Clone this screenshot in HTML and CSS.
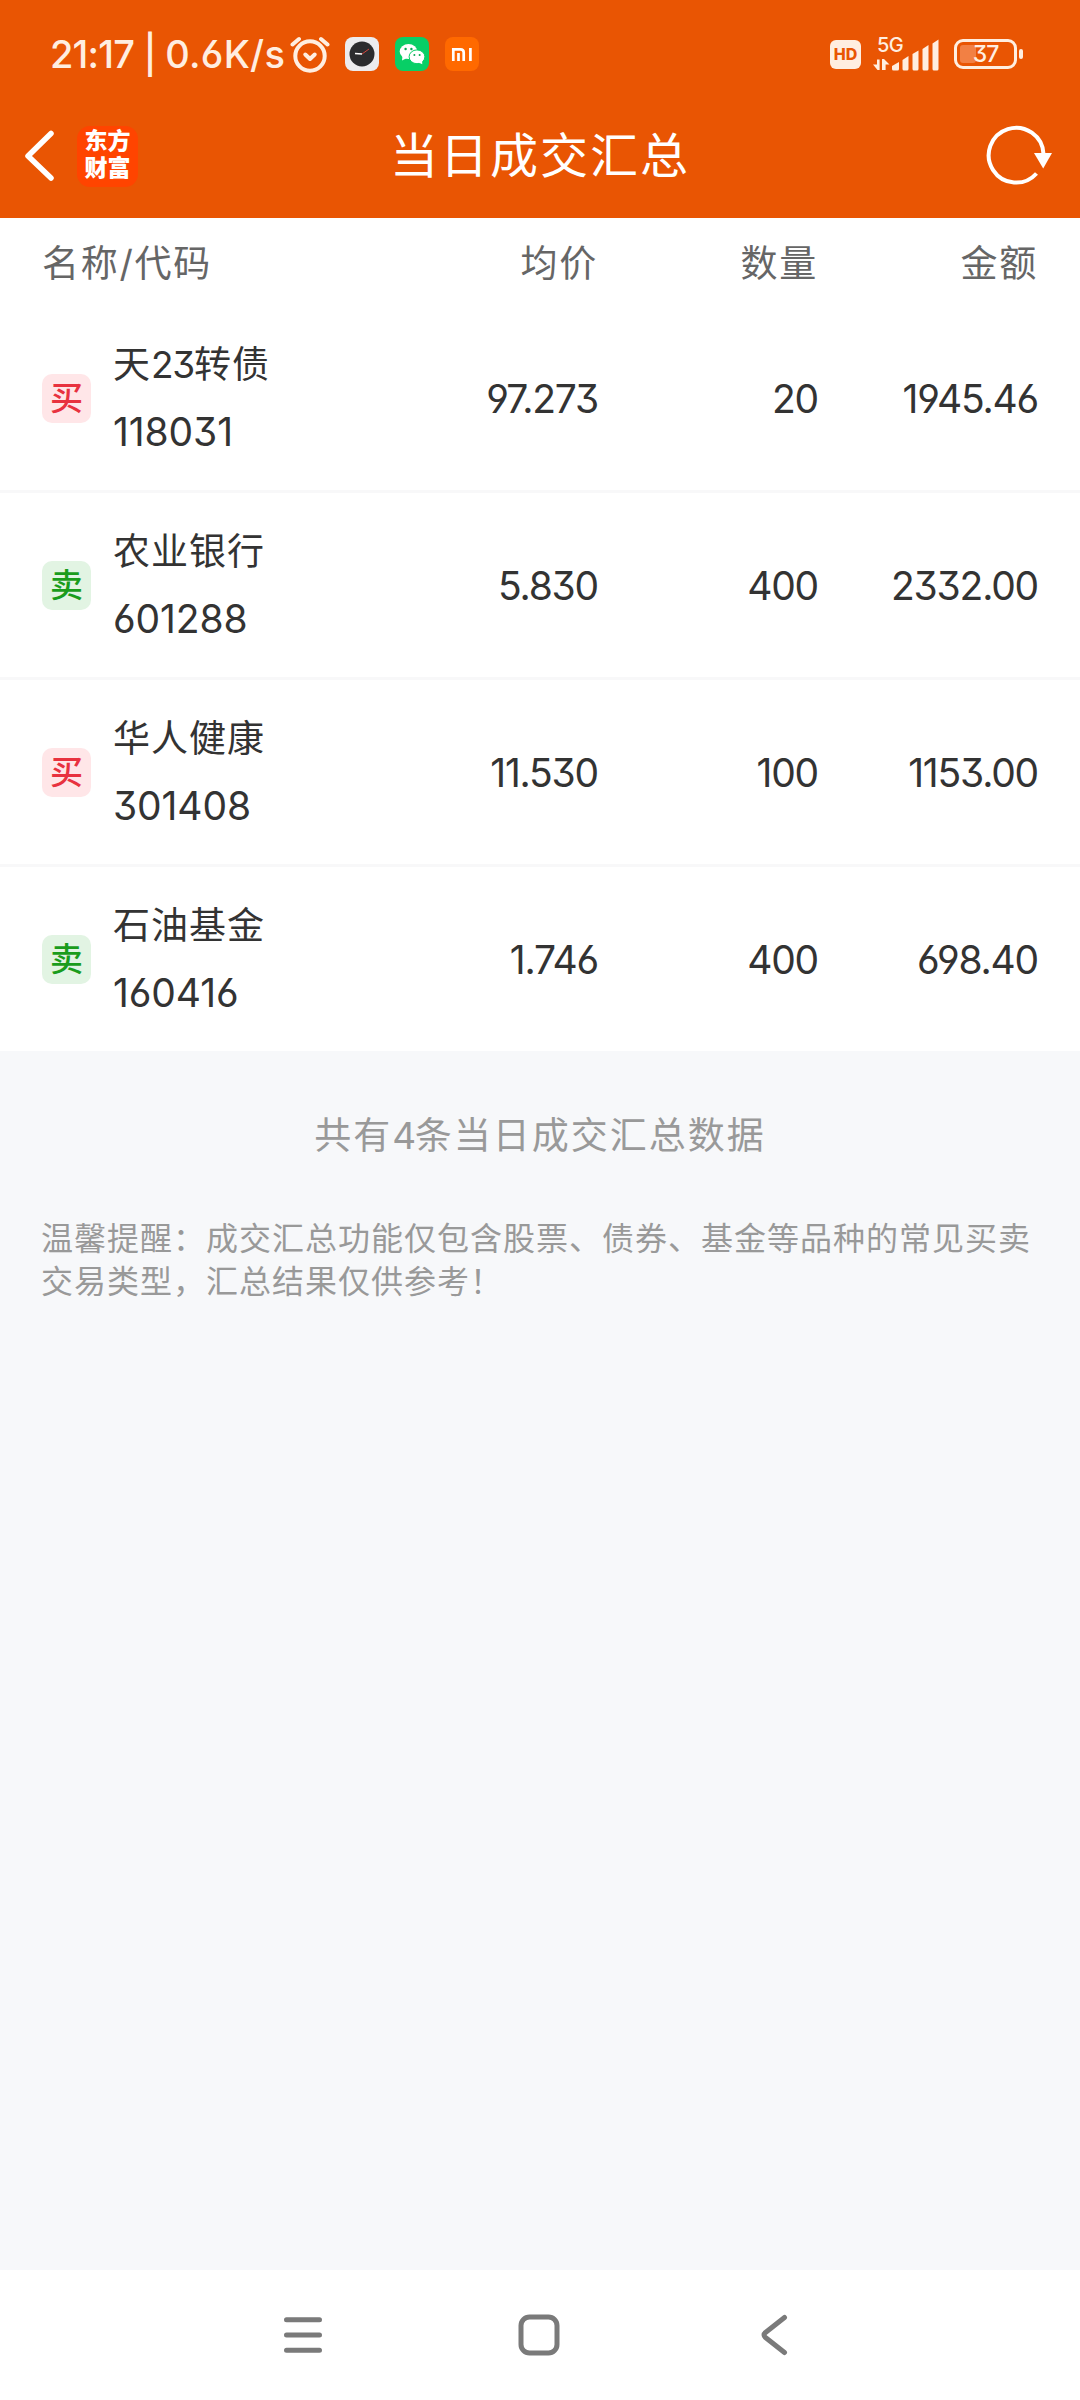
FILE: index.html
```html
<!DOCTYPE html>
<html lang="zh-CN">
<head>
    <meta charset="UTF-8">
    <meta name="viewport" content="width=device-width, initial-scale=1.0">
    <title>当日成交汇总</title>
    <link rel="stylesheet" href="styles.css">
</head>
<body>
    <header class="top">
        <div class="status">
            <span class="clock">21:17 | <span class="speed">0.6K/s</span></span>
            <svg class="alarm" width="40" height="38" viewBox="0 0 40 38" fill="none" stroke="#ffeee0" stroke-linecap="round">
                <circle cx="20" cy="21" r="14.7" stroke-width="4"/>
                <path d="M2.5 9.5 L9 4 M37.5 9.5 L31 4" stroke-width="4"/>
                <path d="M15.3 19.5 L20 24 L24.7 19.5" stroke-width="4" stroke-linejoin="round"/>
            </svg>
            <svg class="app-icon" width="34" height="34" viewBox="0 0 34 34">
                <rect width="34" height="34" rx="8" fill="#ececee"/>
                <circle cx="17" cy="17" r="12.5" fill="#2b2c2e"/>
                <path d="M10 16.5 L17 17" stroke="#fff" stroke-width="1.3"/>
                <path d="M17 17 L24 12" stroke="#d0443c" stroke-width="1"/>
            </svg>
            <svg class="app-icon" width="34" height="34" viewBox="0 0 34 34">
                <rect width="34" height="34" rx="8" fill="#08cf66"/>
                <ellipse cx="13.5" cy="14.5" rx="8.8" ry="7.6" fill="#fff"/>
                <path d="M7.5 19 L7 23.5 L12 21 Z" fill="#fff"/>
                <ellipse cx="22" cy="19.8" rx="7.9" ry="6.9" fill="#fff" stroke="#08cf66" stroke-width="1"/>
                <path d="M23.5 25.5 L27.3 27.3 L27 23.5 Z" fill="#fff"/>
                <g fill="#08a852">
                    <circle cx="10.6" cy="12" r="1.2"/><circle cx="16.4" cy="12" r="1.2"/>
                    <circle cx="19.4" cy="18" r="1"/><circle cx="24.6" cy="18" r="1"/>
                </g>
            </svg>
            <svg class="app-icon" width="34" height="34" viewBox="0 0 34 34">
                <rect width="34" height="34" rx="8" fill="#ff6900"/>
                <path d="M8.3 24 V12.3 H15.5 Q18.7 12.3 18.7 15.5 V24 M13.5 16 V24 M25.4 11 V24" fill="none" stroke="#fff" stroke-width="2.7"/>
            </svg>

            <div class="status-right">
                <span class="hd">HD</span>
                <div class="signal">
                    <span class="net">5G</span>
                    <svg width="68" height="34" viewBox="0 0 68 34" fill="#ffeee0">
                        <path d="M4 22.5 h2.6 V33 H4.5 L0 27.5 H4 Z M9 22 h2 L16.5 27.5 H12.6 V33 H9 Z"/>
                        <path d="M19 32 V29 L26 25 V32 Q26 33.5 24.5 33.5 H20.5 Q19 33.5 19 32 Z"/>
                        <path d="M29.5 32 V23 L35.5 19 V32 Q35.5 33.5 34 33.5 H31 Q29.5 33.5 29.5 32 Z"/>
                        <path d="M39.5 32 V17 L45.5 13.5 V32 Q45.5 33.5 44 33.5 H41 Q39.5 33.5 39.5 32 Z"/>
                        <path d="M49.5 32 V12 L55.5 8 V32 Q55.5 33.5 54 33.5 H51 Q49.5 33.5 49.5 32 Z"/>
                        <path d="M59.5 32 V6.5 L65.5 2.5 V32 Q65.5 33.5 64 33.5 H61 Q59.5 33.5 59.5 32 Z"/>
                    </svg>
                </div>
                <div class="battery">
                    <div class="level"></div>
                    <span class="percent">37</span>
                </div>
                <div class="battery-tip"></div>
            </div>
        </div>

        <div class="titlebar">
            <svg class="back" width="34" height="54" viewBox="0 0 34 54" fill="none" stroke="#fff" stroke-width="5.5" stroke-linecap="round" stroke-linejoin="round">
                <path d="M28 4.5 L5 27 L28 49"/>
            </svg>
            <div class="brand">东方<br>财富</div>
            <h1>当日成交汇总</h1>
            <svg class="refresh" width="68" height="62" viewBox="0 0 68 62">
                <path d="M57.5 29 A27.4 27.4 0 1 0 50.5 48.5" fill="none" stroke="#fff" stroke-width="4"/>
                <path d="M48 28 H66 L57.2 43.5 Z" fill="#fff"/>
            </svg>
        </div>
    </header>

    <main>
        <div class="row head">
            <span>名称/代码</span>
            <span class="num">均价</span>
            <span class="num">数量</span>
            <span class="num">金额</span>
        </div>
        <div class="row">
            <div class="stock">
                <span class="tag buy">买</span>
                <div class="info">
                    <div class="name">天<span class="digits">23</span>转债</div>
                    <div class="code">118031</div>
                </div>
            </div>
            <span class="num">97.273</span>
            <span class="num">20</span>
            <span class="num">1945.46</span>
        </div>
        <div class="row">
            <div class="stock">
                <span class="tag sell">卖</span>
                <div class="info">
                    <div class="name">农业银行</div>
                    <div class="code">601288</div>
                </div>
            </div>
            <span class="num">5.830</span>
            <span class="num">400</span>
            <span class="num">2332.00</span>
        </div>
        <div class="row">
            <div class="stock">
                <span class="tag buy">买</span>
                <div class="info">
                    <div class="name">华人健康</div>
                    <div class="code">301408</div>
                </div>
            </div>
            <span class="num">11.530</span>
            <span class="num">100</span>
            <span class="num">1153.00</span>
        </div>
        <div class="row">
            <div class="stock">
                <span class="tag sell">卖</span>
                <div class="info">
                    <div class="name">石油基金</div>
                    <div class="code">160416</div>
                </div>
            </div>
            <span class="num">1.746</span>
            <span class="num">400</span>
            <span class="num">698.40</span>
        </div>
    </main>

    <section class="footer">
        <p class="total">共有<span class="digits">4</span>条当日成交汇总数据</p>
        <p class="tip">温馨提醒：成交汇总功能仅包含股票、债券、基金等品种的常见买卖交易类型，汇总结果仅供参考！</p>
    </section>

    <nav class="navbar">
        <svg width="44" height="44" viewBox="0 0 44 44" stroke="#7a7a7a" stroke-width="5" stroke-linecap="round">
            <path d="M5.5 6.7 H38.5 M5.5 22 H38.5 M5.5 37.3 H38.5"/>
        </svg>
        <svg width="44" height="44" viewBox="0 0 44 44" fill="none" stroke="#7a7a7a" stroke-width="5">
            <rect x="3" y="4" width="36" height="36" rx="8.5"/>
        </svg>
        <svg width="44" height="44" viewBox="0 0 44 44" fill="none" stroke="#7a7a7a" stroke-width="5" stroke-linecap="round">
            <path d="M29.5 4.5 L10.5 19.5 Q7.5 22 10.5 24.5 L29.5 39.5"/>
        </svg>
    </nav>
</body>
</html>
```

FILE: styles.css
```css
* {
    box-sizing: border-box;
}
body {
    margin: 0;
    min-height: 2400px;
    display: flex;
    flex-direction: column;
    background-color: #f7f8fa;
    color: #333;
    font-family: Inter, "Noto Sans CJK SC", sans-serif;
    font-feature-settings: "cv03", "cv04", "cv09";
}

/* status bar + title */
.top {
    height: 218px;
    background-color: #e95503;
    color: #fff;
}
.status {
    height: 108px;
    padding: 0 57px 0 50px;
    display: flex;
    align-items: center;
    color: #ffeee0;
}
.clock {
    width: 240px;
    font-size: 38px;
    font-weight: 500;
    letter-spacing: -0.8px;
    white-space: nowrap;
}
.speed {
    letter-spacing: 0.3px;
}
.alarm {
    margin-right: 15px;
}
.app-icon {
    margin-right: 16px;
}
.status-right {
    display: flex;
    align-items: center;
    margin-left: auto;
}
.hd {
    width: 31px;
    height: 29px;
    border-radius: 6px;
    background-color: #ffeee0;
    color: #e95503;
    font-size: 16px;
    font-weight: 800;
    line-height: 29px;
    text-align: center;
}
.signal {
    position: relative;
    width: 68px;
    height: 34px;
    margin: 0 13px 0 12px;
}
.net {
    position: absolute;
    left: 4px;
    top: -2px;
    font-size: 20px;
    font-weight: 500;
    line-height: 20px;
    letter-spacing: -0.5px;
}
.battery {
    position: relative;
    width: 63px;
    height: 30px;
    border: 3px solid #ffeee0;
    border-radius: 9px;
    text-align: center;
}
.level {
    position: absolute;
    left: 3px;
    top: 3px;
    width: 16px;
    height: 18px;
    border-radius: 3px;
    background-color: #f28044;
}
.percent {
    position: relative;
    display: block;
    font-size: 23px;
    font-weight: 500;
    line-height: 24px;
    letter-spacing: -1px;
}
.battery-tip {
    width: 4px;
    height: 10px;
    margin-left: 2px;
    border-radius: 2px;
    background-color: #ffeee0;
}
.titlebar {
    height: 96px;
    padding: 0 26px 0 23px;
    display: grid;
    grid-template-columns: 54px 61px 1fr 112px;
    align-items: center;
}
.brand {
    height: 61px;
    padding-top: 2px;
    border-radius: 13px;
    background-color: #ff4400;
    font-size: 23px;
    font-weight: 900;
    line-height: 27px;
    text-align: center;
}
h1 {
    margin: 0;
    font-size: 48px;
    font-weight: 400;
    line-height: 60px;
    letter-spacing: 2px;
    text-align: center;
}
.refresh {
    justify-self: end;
}

/* table */
.row {
    height: 187px;
    padding: 0 42px;
    display: grid;
    grid-template-columns: 336px 220px 220px 220px;
    align-items: center;
    background-color: #fff;
    border-bottom: 3px solid #f8f8f9;
    font-size: 39px;
    letter-spacing: -1.2px;
}
.row:last-child {
    height: 184px;
    border-bottom: none;
}
.head {
    height: 88px;
    padding-bottom: 3px;
    border-bottom: none;
    color: #666;
    font-size: 37px;
    letter-spacing: 1.7px;
}
.num {
    text-align: right;
}
.stock {
    display: flex;
    align-items: center;
}
.tag {
    width: 49px;
    height: 49px;
    margin-right: 22px;
    border-radius: 10px;
    font-size: 33px;
    font-weight: 500;
    line-height: 49px;
    letter-spacing: 0;
    text-align: center;
}
.buy {
    background-color: #ffe6e8;
    color: #e8323f;
}
.sell {
    background-color: #e2f4e3;
    color: #1a9c1c;
}
.name {
    font-size: 37px;
    line-height: 67px;
    letter-spacing: 1px;
}
.digits {
    letter-spacing: -1.2px;
}
.code {
    line-height: 67px;
    letter-spacing: -0.1px;
}

/* summary and hint */
.footer {
    flex: 1;
    padding: 57px 42px 0;
    color: #999;
}
.total {
    margin: 0;
    font-size: 37px;
    line-height: 56px;
    letter-spacing: 2px;
    text-align: center;
}
.tip {
    margin: 53px 0 0 -1px;
    font-size: 32px;
    line-height: 43px;
    letter-spacing: 1px;
}

/* system navigation */
.navbar {
    height: 130px;
    padding: 0 281px;
    display: flex;
    align-items: center;
    justify-content: space-between;
    background-color: #fff;
}
```
